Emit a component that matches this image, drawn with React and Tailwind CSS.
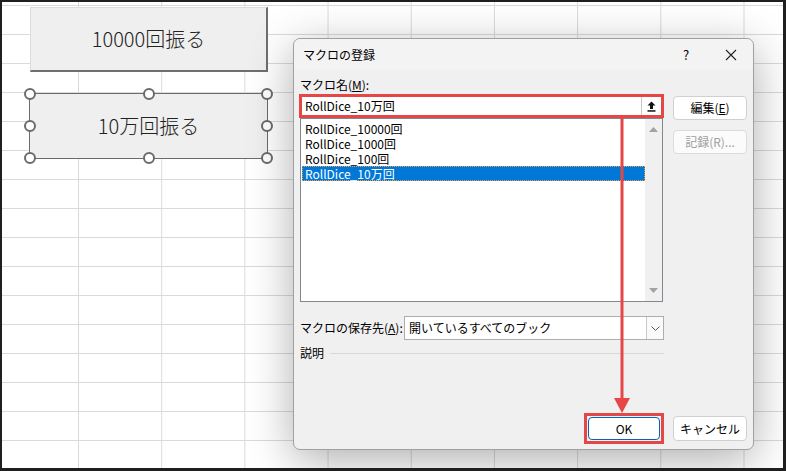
import React from 'react';

const jp = "font-['Noto_Sans_CJK_JP','Noto_Sans',sans-serif]";

function Handle({ pos }) {
  return (
    <span
      className={`absolute w-[12px] h-[12px] -ml-[6px] -mt-[6px] rounded-full bg-white border-2 border-[#6b6b6b] ${pos}`}
    />
  );
}

const macros = ['RollDice_10000回', 'RollDice_1000回', 'RollDice_100回', 'RollDice_10万回'];

export default function App() {
  return (
    <div className={`w-[786px] h-[471px] bg-[#1f1f1f] pt-[2px] pl-[2px] pr-[3px] pb-[3px] ${jp}`}>
      <div className="relative w-full h-full overflow-hidden bg-white bg-[linear-gradient(to_right,#dadada_1px,transparent_1px),linear-gradient(to_bottom,#dadada_1px,transparent_1px)] bg-[size:83.2px_29px] bg-[position:76px_3px]">
        {/* Sheet shapes */}
        <div className="absolute left-[28px] top-[5px] w-[238px] h-[65px] flex items-center justify-center bg-[#efefef] border-t border-l border-[#dcdcdc] border-r-2 border-b-2 border-r-[#6f6f6f] border-b-[#6f6f6f] text-[20px] font-light text-[#222]">
          10000回振る
        </div>
        <div className="absolute left-[27px] top-[91px] w-[239px] h-[66px] flex items-center justify-center bg-[#efefef] border-[1.5px] border-[#6b6b6b] text-[20px] font-light text-[#222]">
          10万回振る
          <Handle pos="left-0 top-0" />
          <Handle pos="left-1/2 top-0" />
          <Handle pos="left-full top-0" />
          <Handle pos="left-0 top-1/2" />
          <Handle pos="left-full top-1/2" />
          <Handle pos="left-0 top-full" />
          <Handle pos="left-1/2 top-full" />
          <Handle pos="left-full top-full" />
        </div>

        {/* Dialog */}
        <div className="absolute left-[291px] top-[36px] w-[461px] h-[412px] flex flex-col rounded-[7px] border border-[#a0a0a0] bg-[#f0f0f0] shadow-[0_10px_45px_rgba(0,0,0,0.32)] text-[12px] text-black">
          <div className="h-[31px] shrink-0 flex items-center pl-[9px] bg-[#f3f3f3] rounded-t-[7px]">
            <span className="flex-1">マクロの登録</span>
            <span className="w-[46px] text-center text-[13px]">?</span>
            <span className="w-[44px] flex justify-center">
              <svg width="12" height="12" viewBox="0 0 12 12">
                <path d="M1 1 L11 11 M11 1 L1 11" stroke="#222" strokeWidth="1.1" />
              </svg>
            </span>
          </div>

          <div className="flex-1 flex flex-col pl-[5px] pr-[6px] pt-[7px] pb-[8px]">
            <div className="flex">
              {/* left column */}
              <div className="w-[365px] flex flex-col">
                <div className="h-[16px] leading-[16px] pl-[1px]">
                  マクロ名(<span className="underline">M</span>):
                </div>
                <div className="mt-[1px] h-[24px] flex items-center border-[3px] border-[#e54646] bg-white">
                  <span className="flex-1 pl-[3px] leading-none">RollDice_10万回</span>
                  <span className="w-[20px] h-full flex items-center justify-center border-l border-[#c8c8c8]">
                    <svg width="9" height="11" viewBox="0 0 9 11">
                      <path d="M4.5 0.5 L8.5 4.5 H6 V8 H3 V4.5 H0.5 Z" fill="#111" />
                      <rect x="0.5" y="9.2" width="8" height="1.5" fill="#111" />
                    </svg>
                  </span>
                </div>
                <div className="mx-[1px] h-[184px] flex border border-[#828790] bg-white">
                  <div className="flex-1 pt-[2px] pl-[1px]">
                    {macros.map((m, i) =>
                      i === 3 ? (
                        <div
                          key={m}
                          className="h-[15px] flex items-center leading-none pl-[2px] bg-[#0078d7] text-white border border-dotted border-[#f0a040]"
                        >
                          {m}
                        </div>
                      ) : (
                        <div key={m} className="h-[15px] flex items-center leading-none pl-[3px]">
                          {m}
                        </div>
                      )
                    )}
                  </div>
                  <div className="w-[17px] bg-[#f0f0f0] flex flex-col items-center justify-between py-[8px]">
                    <svg width="9" height="5" viewBox="0 0 9 5">
                      <path d="M4.5 0 L9 5 H0 Z" fill="#a3a3a3" />
                    </svg>
                    <svg width="9" height="5" viewBox="0 0 9 5">
                      <path d="M0 0 H9 L4.5 5 Z" fill="#a3a3a3" />
                    </svg>
                  </div>
                </div>

                <div className="mt-[14px] h-[24px] flex items-center">
                  <span className="w-[105px] pl-[1px]">
                    マクロの保存先(<span className="underline">A</span>):
                  </span>
                  <div className="flex-1 h-full flex items-center border border-[#adadad] bg-white">
                    <span className="flex-1 pl-[4px]">開いているすべてのブック</span>
                    <span className="w-[17px] h-full flex items-center justify-center border-l border-[#c8c8c8] bg-[#fafafa]">
                      <svg width="9" height="5" viewBox="0 0 9 5">
                        <path d="M0.5 0.5 L4.5 4.5 L8.5 0.5" fill="none" stroke="#555" strokeWidth="1" />
                      </svg>
                    </span>
                  </div>
                </div>

                <div className="mt-[6px] h-[14px] flex items-center">
                  <span className="pl-[1px]">説明</span>
                  <span className="flex-1 ml-[6px] h-px bg-[#d8d8d8]" />
                </div>
              </div>

              {/* right column */}
              <div className="ml-[9px] w-[74px] flex flex-col">
                <button className="mt-[19px] h-[24px] rounded-[4px] border border-[#d0d0d0] bg-white">
                  編集(<span className="underline">E</span>)
                </button>
                <button className="mt-[10px] h-[24px] rounded-[4px] border border-[#dcdcdc] bg-[#fbfbfb] text-[#a0a0a0]">
                  記録(R)...
                </button>
              </div>
            </div>

            <div className="mt-auto h-[25px] flex items-center justify-end">
              <div className="mr-[9px] w-[80px] h-[31px] p-[1px] border-[3px] border-[#e54646]">
                <button className="w-full h-full rounded-[4px] border border-[#0067c0] bg-white">OK</button>
              </div>
              <button className="w-[74px] h-[25px] rounded-[4px] border border-[#d0d0d0] bg-white">キャンセル</button>
            </div>
          </div>
        </div>

        {/* Annotation arrow */}
        <svg className="absolute left-[610px] top-[115px]" width="20" height="297" viewBox="0 0 20 297">
          <line x1="10" y1="0" x2="10" y2="283" stroke="#e54646" strokeWidth="3" />
          <path d="M2 281 H18 L10 296 Z" fill="#e54646" />
        </svg>
      </div>
    </div>
  );
}
